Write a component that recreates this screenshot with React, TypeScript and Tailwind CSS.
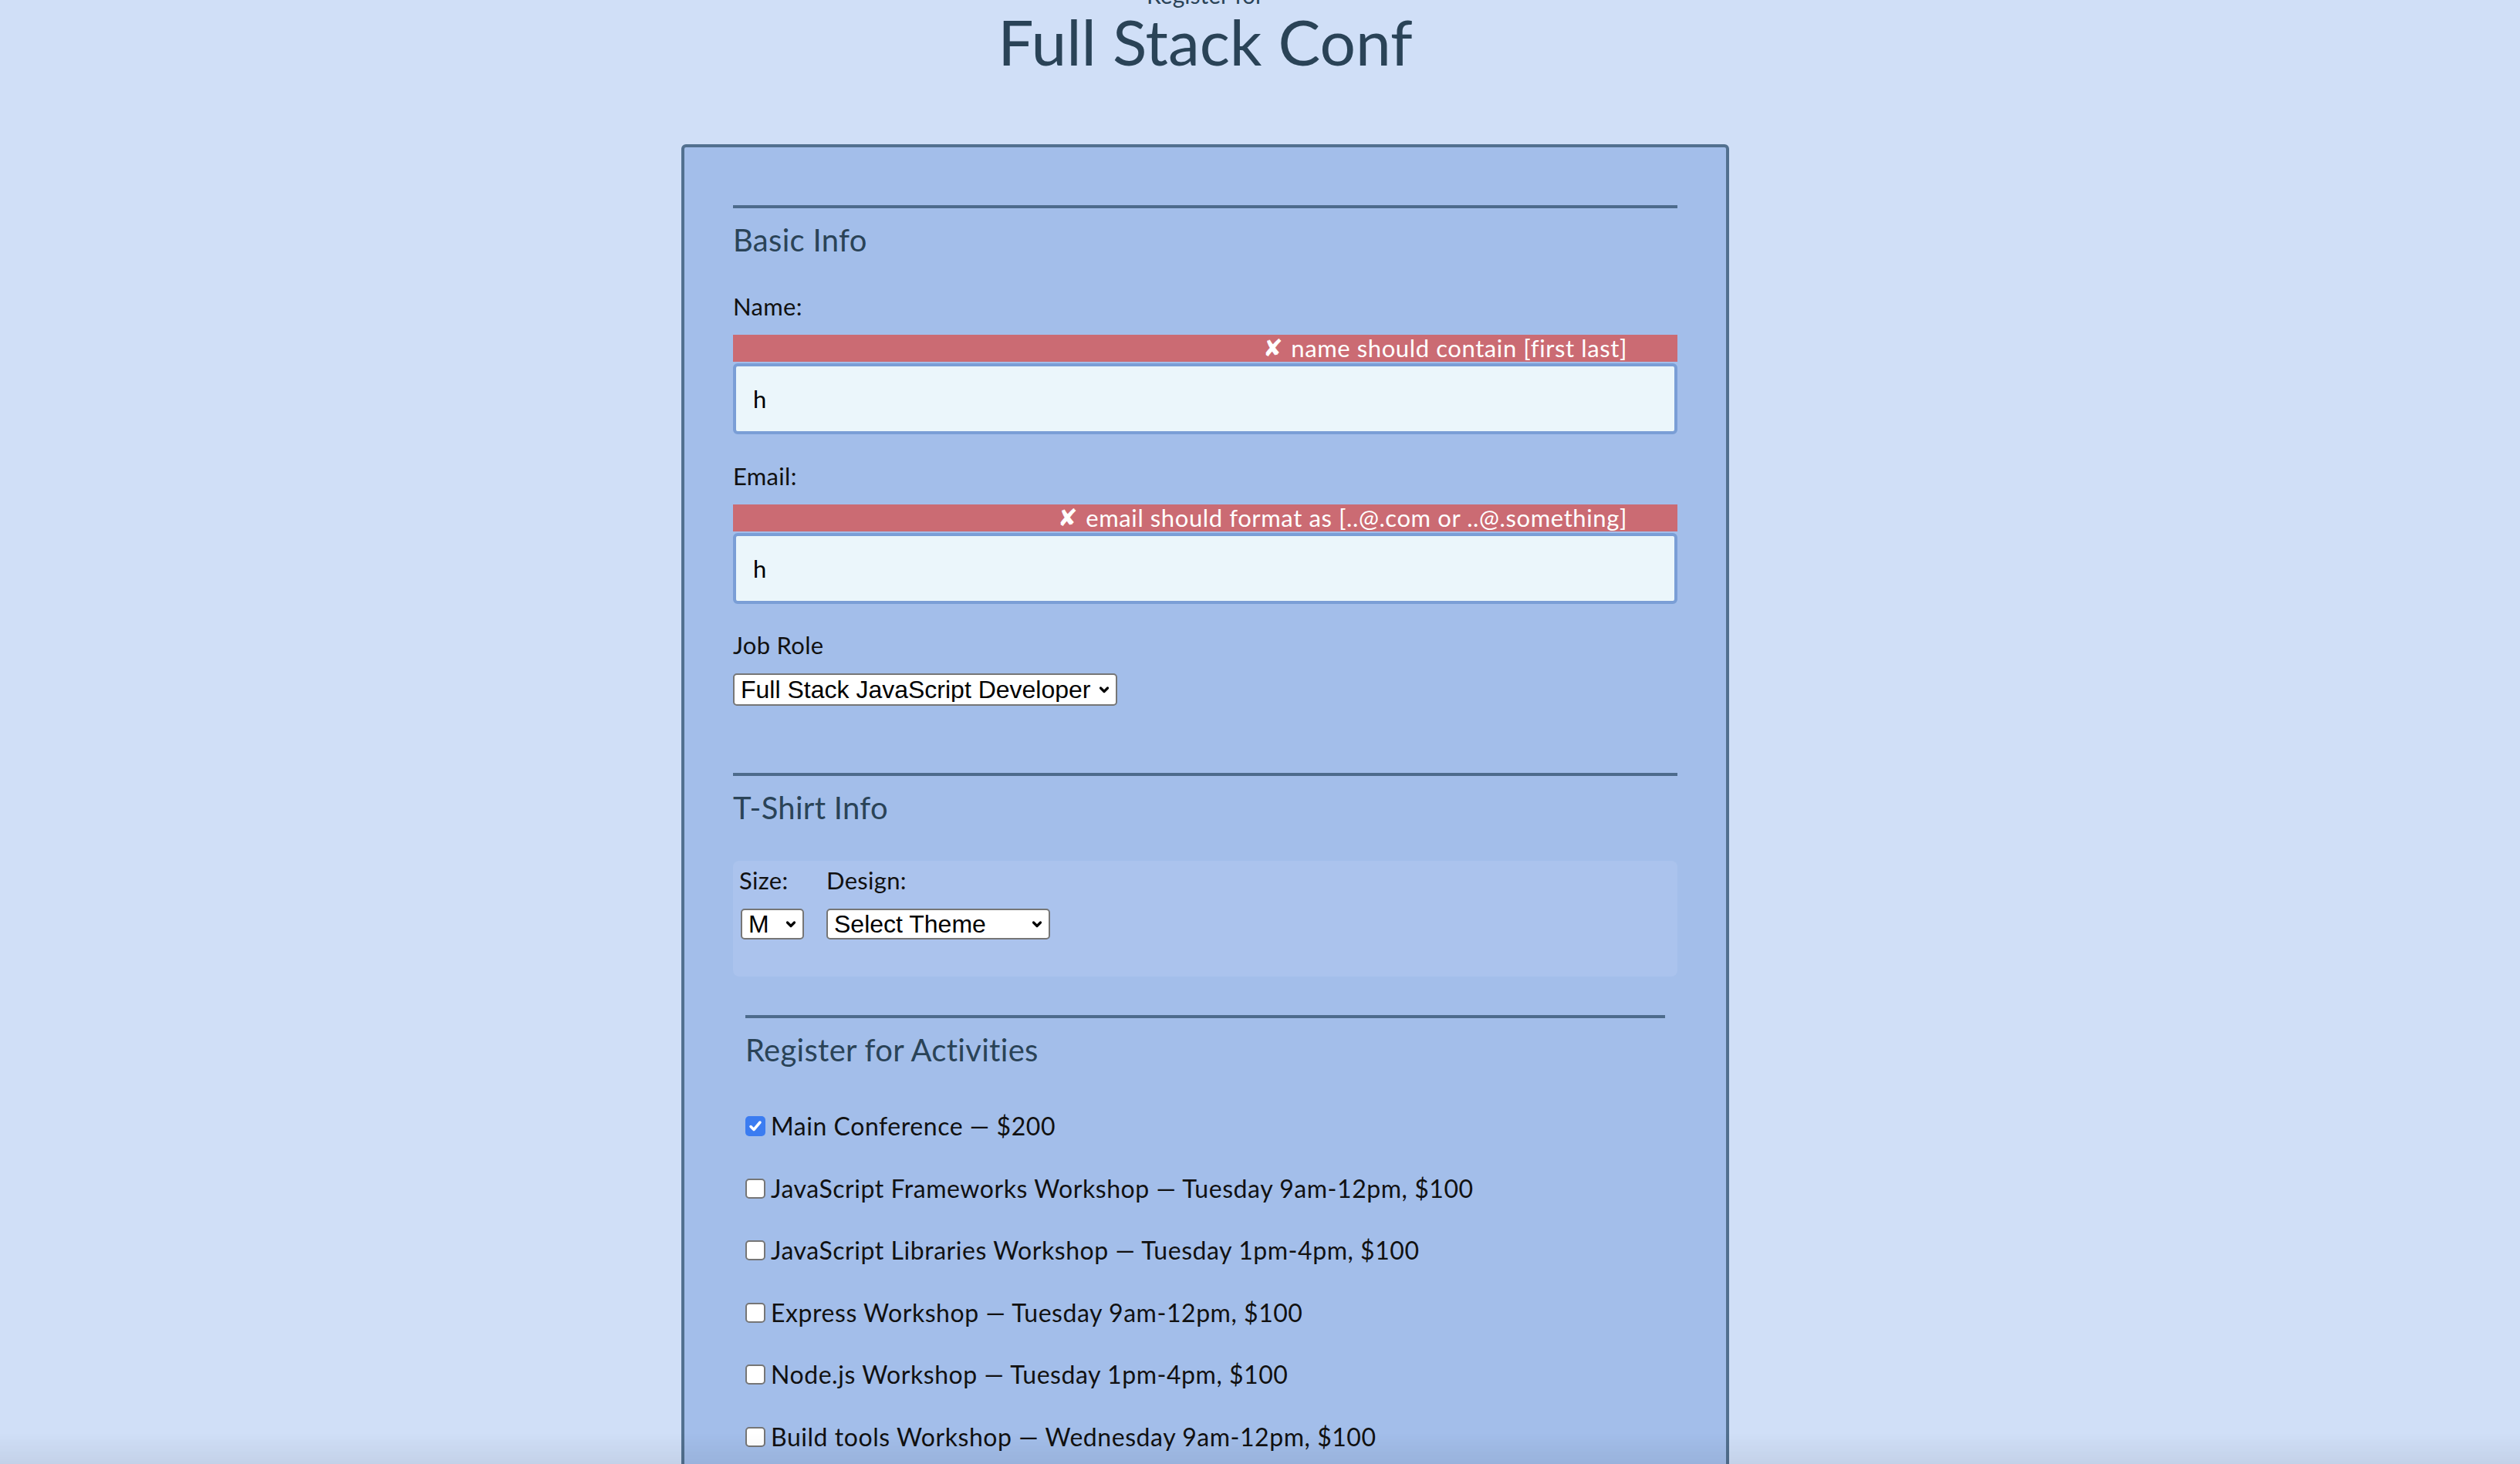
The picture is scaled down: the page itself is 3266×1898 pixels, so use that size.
import type { ReactNode } from "react";

const ACTIVITIES = [
  { label: "Main Conference — $200", checked: true },
  { label: "JavaScript Frameworks Workshop — Tuesday 9am-12pm, $100", checked: false },
  { label: "JavaScript Libraries Workshop — Tuesday 1pm-4pm, $100", checked: false },
  { label: "Express Workshop — Tuesday 9am-12pm, $100", checked: false },
  { label: "Node.js Workshop — Tuesday 1pm-4pm, $100", checked: false },
  { label: "Build tools Workshop — Wednesday 9am-12pm, $100", checked: false },
  { label: "npm Workshop — Wednesday 1pm-4pm, $100", checked: false },
];

function SectionTitle({ children }: { children: ReactNode }) {
  return (
    <>
      <div className="h-[4px] bg-[#4d6b8c]" />
      <h2 className="mt-[21px] text-[40px] leading-none tracking-[0.3px] text-[#2a4357]">{children}</h2>
    </>
  );
}

function Chevron() {
  return (
    <svg
      className="pointer-events-none absolute right-[10px] top-1/2 -translate-y-1/2"
      width="14"
      height="10"
      viewBox="0 0 14 10"
      fill="none"
    >
      <path d="M2.5 3 L7 7.5 L11.5 3" stroke="#000" strokeWidth="3.2" strokeLinecap="round" strokeLinejoin="round" />
    </svg>
  );
}

function FakeSelect({ value, className }: { value: string; className: string }) {
  return (
    <div className={"relative " + className}>
      <select
        defaultValue={value}
        className="h-full w-full appearance-none rounded-[5px] border-2 border-[#767676] bg-white pl-[8px] font-['Liberation_Sans',Arial,sans-serif] text-[32px] leading-none text-black outline-none"
      >
        <option>{value}</option>
      </select>
      <Chevron />
    </div>
  );
}

function TextField({ label, error, labelGap }: { label: string; error: string; labelGap: string }) {
  return (
    <>
      <label className={labelGap + " block text-[31px] leading-none tracking-[0.3px]"}>{label}</label>
      <div className="mt-[21px] flex h-[35px] items-center justify-end bg-[#cb6b73] pr-[65px] text-[31px] leading-none tracking-[0.6px] text-white">
        <span className="mr-[10px] font-['DejaVu_Sans',sans-serif] text-[31px] font-bold">✘</span>
        {error}
      </div>
      <input
        defaultValue="h"
        className="mt-[2px] block h-[92px] w-full rounded-[6px] border-4 border-[#7a9ed6] bg-[#ebf6fb] px-[22px] text-[31px] text-black outline-none"
      />
    </>
  );
}

function Checkbox({ checked }: { checked: boolean }) {
  if (checked) {
    return (
      <span className="flex h-[26px] w-[26px] shrink-0 items-center justify-center rounded-[5px] bg-[#3b7cf1]">
        <svg width="18" height="16" viewBox="0 0 18 16" fill="none">
          <path d="M3 8.5 L7 12.5 L15 3" stroke="#fff" strokeWidth="3.5" strokeLinecap="round" strokeLinejoin="round" />
        </svg>
      </span>
    );
  }
  return <span className="h-[26px] w-[26px] shrink-0 rounded-[5px] border-2 border-[#767676] bg-white" />;
}

export default function App() {
  return (
    <div className="min-h-screen overflow-hidden bg-[#d0dff7] font-['Lato',sans-serif] text-[#111]">
      <div className="flex flex-col items-center pr-[142px]">
        {/* Header */}
        <header className="-mt-[22px] flex flex-col items-center text-[#2a4357]">
          <p className="text-[30px] leading-none">Register for</p>
          <h1 className="mt-[4px] text-[82px] leading-none">Full Stack Conf</h1>
        </header>

        <form className="mt-[93px] w-[1358px] rounded-[6px] border-4 border-[#52708f] bg-[#a3beea] px-[63px] pb-[200px] pt-[75px]">
          {/* Basic Info */}
          <SectionTitle>Basic Info</SectionTitle>
          <TextField label="Name:" error="name should contain [first last]" labelGap="mt-[51px]" />
          <TextField label="Email:" error="email should format as [..@.com or ..@.something]" labelGap="mt-[39px]" />

          <label className="mt-[38px] block text-[31px] leading-none tracking-[0.3px]">Job Role</label>
          <FakeSelect value="Full Stack JavaScript Developer" className="mt-[21px] h-[42px] w-[498px]" />

          {/* T-Shirt Info */}
          <div className="mt-[87px]">
            <SectionTitle>T-Shirt Info</SectionTitle>
          </div>
          <div className="mt-[49px] flex gap-[29px] rounded-[8px] bg-[#abc3ed] pb-[48px] pl-[8px] pt-[10px]">
            <div className="flex flex-col">
              <span className="text-[31px] leading-none tracking-[0.3px]">Size:</span>
              <FakeSelect value="M" className="ml-[2px] mt-[21px] h-[40px] w-[82px]" />
            </div>
            <div className="flex flex-col">
              <span className="text-[31px] leading-none tracking-[0.3px]">Design:</span>
              <FakeSelect value="Select Theme" className="mt-[21px] h-[40px] w-[290px]" />
            </div>
          </div>

          {/* Activities */}
          <div className="mt-[50px] px-[16px]">
            <SectionTitle>Register for Activities</SectionTitle>
            <div className="mt-[39px] flex flex-col">
              {ACTIVITIES.map((a, idx) => (
                <label key={idx} className="flex h-[80.5px] items-center gap-[7px] text-[32px] leading-none tracking-[0.55px]">
                  <Checkbox checked={a.checked} />
                  <span>{a.label}</span>
                </label>
              ))}
            </div>
          </div>
        </form>
      </div>

      {/* bottom fade */}
      <div className="pointer-events-none fixed inset-x-0 bottom-0 h-[40px] bg-gradient-to-b from-transparent to-[rgba(0,0,0,0.06)]" />
    </div>
  );
}
